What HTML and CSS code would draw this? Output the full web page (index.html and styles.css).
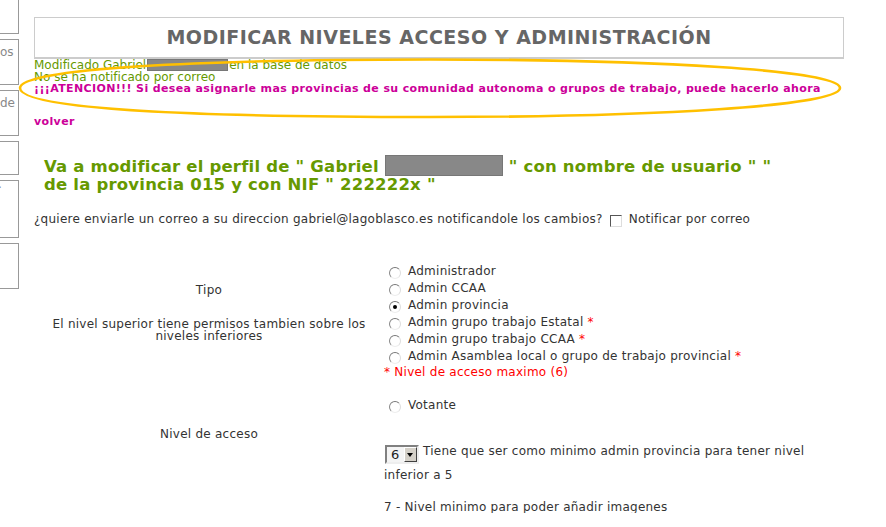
FILE: index.html
```html
<!DOCTYPE html>
<html lang="es">
<head>
<meta charset="utf-8">
<title>Modificar niveles acceso</title>
<link rel="stylesheet" href="styles.css">
</head>
<body>
<div class="page">
  <aside class="side">
    <div class="sbox b1"></div>
    <div class="sbox b2"><span>os</span></div>
    <div class="sbox b3"><span>de</span></div>
    <div class="sbox b4"></div>
    <div class="sbox b5"><span>·</span></div>
    <div class="sbox b6"></div>
  </aside>
  <main class="main">
    <h1 class="title">MODIFICAR NIVELES ACCESO Y ADMINISTRACIÓN</h1>
    <div class="notice">
      <div class="ok">Modificado Gabriel<span class="redact r1"></span>en la base de datos</div>
      <div class="ok">No se ha notificado por correo</div>
      <div class="warn">¡¡¡ATENCION!!! Si desea asignarle mas provincias de su comunidad autonoma o grupos de trabajo, puede hacerlo ahora</div>
      <svg class="ring" width="840" height="64" viewBox="0 0 840 64" aria-hidden="true">
        <path d="M6,30 C6,10 190,1.5 416,1.5 C640,1.5 826,12 826,30 C826,48 640,59 416,59 C190,59 6,52 6,30 Z" fill="none" stroke="#ffc000" stroke-width="2.6"/>
      </svg>
    </div>
    <a class="back" href="#">volver</a>
    <h2 class="profile">Va a modificar el perfil de " Gabriel <span class="redact r2"></span> " con nombre de usuario " "<br>de la provincia 015 y con NIF " 222222x "</h2>
    <p class="mailq">¿quiere enviarle un correo a su direccion gabriel@lagoblasco.es notificandole los cambios? <span class="chk"></span> Notificar por correo</p>
    <div class="grid">
      <div class="lab lab1">
        <p class="l-tipo">Tipo</p>
        <p class="l-sup">El nivel superior tiene permisos tambien sobre los niveles inferiores</p>
      </div>
      <div class="opts">
        <div class="opt"><span class="radio"></span>Administrador</div>
        <div class="opt"><span class="radio"></span>Admin CCAA</div>
        <div class="opt"><span class="radio on"></span>Admin provincia</div>
        <div class="opt"><span class="radio"></span>Admin grupo trabajo Estatal <span class="req">*</span></div>
        <div class="opt"><span class="radio"></span>Admin grupo trabajo CCAA <span class="req">*</span></div>
        <div class="opt"><span class="radio"></span>Admin Asamblea local o grupo de trabajo provincial <span class="req">*</span></div>
        <div class="maxnote">* Nivel de acceso maximo (6)</div>
      </div>
      <div class="lab lab2">
        <p class="l-nivel">Nivel de acceso</p>
      </div>
      <div class="opts opts2">
        <div class="opt"><span class="radio"></span>Votante</div>
        <div class="levelrow"><span class="select"><span class="sel-val">6</span><span class="sel-btn"></span></span> Tiene que ser como minimo admin provincia para tener nivel inferior a 5</div>
        <p class="minimg">7 - Nivel minimo para poder añadir imagenes</p>
      </div>
    </div>
  </main>
</div>
</body>
</html>
```
FILE: styles.css
```css
html, body {
  margin: 0;
  padding: 0;
  background: #fff;
}
body {
  font-family: "DejaVu Sans", Verdana, sans-serif;
  font-size: 12px;
  letter-spacing: 0.25px;
  color: #333;
  overflow: hidden;
}
.page {
  display: flex;
  align-items: flex-start;
}
.side {
  width: 19px;
  flex: none;
  margin-top: -10px;
  display: flex;
  flex-direction: column;
  gap: 5px;
}
.sbox {
  box-sizing: border-box;
  width: 19px;
  border: 1px solid #999;
  border-left: none;
  overflow: hidden;
  color: #888;
  font-size: 12px;
  letter-spacing: 0;
  line-height: 12px;
}
.sbox span { display: block; padding-top: 6px; white-space: nowrap; }
.b1 { height: 44px; }
.b2 { height: 46px; }
.b3 { height: 46px; }
.b4 { height: 34px; }
.b5 { height: 58px; }
.b5 span { padding-top: 1px; margin-left: -2px; }
.b6 { height: 46px; }

.main {
  margin-left: 15px;
  width: 810px;
  flex: none;
}
.title {
  box-sizing: border-box;
  margin: 17px 0 0;
  height: 42px;
  border: 1px solid #ccc;
  border-bottom-width: 2px;
  text-align: center;
  font-size: 19px;
  line-height: 39px;
  font-weight: bold;
  color: #666;
  letter-spacing: 0.5px;
}
.notice {
  position: relative;
  line-height: 12px;
}
.ok { color: #669900; white-space: nowrap; letter-spacing: 0; }
.warn {
  color: #cc0099;
  font-weight: bold;
  white-space: nowrap;
  font-size: 11px;
  letter-spacing: 0.37px;
}
.redact {
  display: inline-block;
  box-sizing: border-box;
  background: #888;
  border: 1px solid #777;
}
.r1 { width: 81px; height: 12px; vertical-align: -2px; margin: 0 1px 0 1px; }
.ring {
  position: absolute;
  left: -20px;
  top: -1px;
  pointer-events: none;
}
.back {
  display: block;
  margin-top: 21px;
  color: #cc0099;
  font-weight: bold;
  font-size: 11px;
  letter-spacing: 0.37px;
  text-decoration: none;
  line-height: 12px;
}
.profile {
  margin: 27px 0 0 10px;
  color: #669900;
  font-size: 16.5px;
  letter-spacing: 0.2px;
  line-height: 18px;
  font-weight: bold;
}
.r2 { width: 118px; height: 21px; vertical-align: -4px; }
.mailq {
  margin: 18px 0 0;
  line-height: 14px;
  white-space: nowrap;
}
.chk {
  display: inline-block;
  box-sizing: border-box;
  width: 12px;
  height: 12px;
  border: 1px solid;
  border-color: #555 #ddd #ddd #555;
  background: #fff;
  vertical-align: -4px;
  margin: 0 3px 0 3px;
}
.grid {
  display: grid;
  grid-template-columns: 350px 1fr;
  margin-top: 35px;
}
.lab { text-align: center; }
.lab p { margin: 0; line-height: 12px; }
.l-tipo { padding-top: 22px; }
.l-sup { margin-top: 22px !important; padding: 0 12px; }
.l-nivel { padding-top: 47px; }
.opt {
  height: 17px;
  display: flex;
  align-items: center;
  white-space: nowrap;
}
.req { color: #f00; margin-left: 4px; }
.radio {
  box-sizing: border-box;
  width: 12px;
  height: 12px;
  border-radius: 50%;
  border: 1px solid;
  border-color: #777 #ddd #eee #888;
  background: #fff;
  margin: 5px 7px 0 5px;
  flex: none;
  position: relative;
}
.radio.on::after {
  content: "";
  position: absolute;
  left: 3px;
  top: 3px;
  width: 4px;
  height: 4px;
  border-radius: 50%;
  background: #000;
}
.maxnote {
  color: #f00;
  line-height: 17px;
}
.opts2 { padding-top: 15px; }
.levelrow {
  margin-top: 27px;
  line-height: 22px;
  width: 425px;
}
.select {
  display: inline-flex;
  box-sizing: border-box;
  width: 34px;
  height: 19px;
  border: 2px solid;
  border-color: #808080 #eee #eee #808080;
  vertical-align: -4px;
  margin-left: 1px;
  background: #eee;
  letter-spacing: 0;
}
.sel-val {
  flex: 1;
  font-size: 13px;
  line-height: 15px;
  padding-left: 4px;
  color: #222;
  background: #f4f4f4;
}
.sel-btn {
  width: 13px;
  height: 15px;
  box-sizing: border-box;
  background: #d4d0c8;
  border: 1px solid;
  border-color: #fff #404040 #404040 #fff;
  position: relative;
}
.sel-btn::after {
  content: "";
  position: absolute;
  left: 2px;
  top: 5px;
  border-left: 3.5px solid transparent;
  border-right: 3.5px solid transparent;
  border-top: 4px solid #000;
}
.minimg {
  margin: 15px 0 0;
  line-height: 12px;
}
```
